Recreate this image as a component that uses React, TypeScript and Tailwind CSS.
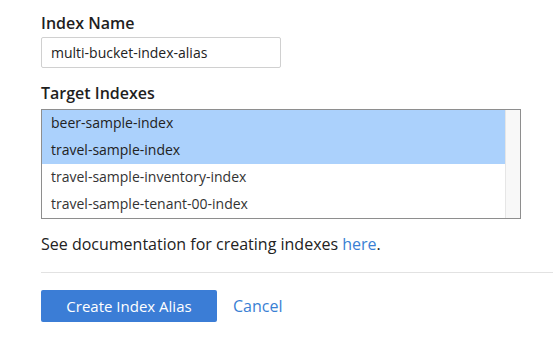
const indexes = [
  { name: 'beer-sample-index', selected: true },
  { name: 'travel-sample-index', selected: true },
  { name: 'travel-sample-inventory-index', selected: false },
  { name: 'travel-sample-tenant-00-index', selected: false },
]

export default function App() {
  return (
    <div className="min-h-screen bg-white pl-[41px] pt-[12px] text-[#1f1f1f] font-['Open_Sans',sans-serif]">
      <label className="block text-[16px] font-semibold leading-[22px]">Index Name</label>
      <input
        defaultValue="multi-bucket-index-alias"
        className="mt-[3px] block h-[31px] w-[240px] rounded-[2px] border border-[#d0d0d0] px-[9px] text-[14px] text-[#222] outline-none"
      />

      <label className="mt-[14px] block text-[16px] font-semibold leading-[22px]">Target Indexes</label>
      <div className="mt-[5px] flex h-[110px] w-[480px] border border-[#8e8e8e]">
        <div className="flex-1">
          {indexes.map(item => (
            <div
              key={item.name}
              className={`h-[27px] pl-[9px] text-[14px] leading-[26px] ${item.selected ? 'bg-[#abd1fc] text-[#222]' : 'text-[#333]'}`}
            >
              {item.name}
            </div>
          ))}
        </div>
        <div className="w-[15px] border-l border-[#e6e6e6] bg-[#f8f8f8]" />
      </div>

      <p className="mt-[15px] text-[16px] leading-[20px] text-[#222]">
        See documentation for creating indexes <a className="text-[#3a7fd4]">here</a>.
      </p>

      <div className="mt-[18px] h-px bg-[#e2e2e2]" />

      <div className="mt-[17px] flex items-center gap-[16px]">
        <button className="h-[32px] w-[176px] rounded-[2px] bg-[#3b7dd6] text-[15px] text-white">
          Create Index Alias
        </button>
        <a className="text-[16px] text-[#3a7fd4]">Cancel</a>
      </div>
    </div>
  )
}
